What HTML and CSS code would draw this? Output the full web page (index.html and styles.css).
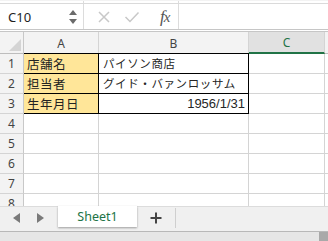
FILE: index.html
```html
<!DOCTYPE html>
<html lang="ja">
<head>
<meta charset="utf-8">
<link rel="stylesheet" href="styles.css">
</head>
<body>
<div class="app">
  <div class="fbar">
    <div class="namebox">
      <span class="name">C10</span>
      <span class="spin">
        <svg width="8" height="16" viewBox="0 0 8 16"><path d="M4 1 L8 6 L0 6 Z" fill="#6b6b6b"/><path d="M0 10 L8 10 L4 15 Z" fill="#6b6b6b"/></svg>
      </span>
    </div>
    <div class="btns">
      <svg class="ic" width="14" height="14" viewBox="0 0 14 14"><path d="M2 2 L12 12 M12 2 L2 12" stroke="#c8c8c8" stroke-width="1.5" fill="none"/></svg>
      <svg class="ic" width="16" height="14" viewBox="0 0 16 14"><path d="M1.5 7 L6 11.5 L14.5 2.5" stroke="#c8c8c8" stroke-width="1.5" fill="none"/></svg>
      <span class="fx"><i>f</i><i class="x">x</i></span>
    </div>
    <div class="input"></div>
  </div>
  <div class="sheet">
    <div class="corner"><svg width="12" height="12" viewBox="0 0 12 12"><path d="M12 0 L12 12 L0 12 Z" fill="#d4d4d4"/></svg></div>
    <div class="ch">A</div>
    <div class="ch">B</div>
    <div class="ch sel">C</div>
    <div class="ch last"></div>

    <div class="rh">1</div>
    <div class="c lab bt">店舗名</div>
    <div class="c val bt">パイソン商店</div>
    <div class="c"></div><div class="c last"></div>

    <div class="rh">2</div>
    <div class="c lab bt">担当者</div>
    <div class="c val bt">グイド・バァンロッサム</div>
    <div class="c"></div><div class="c last"></div>

    <div class="rh">3</div>
    <div class="c lab bt">生年月日</div>
    <div class="c val num bt">1956/1/31</div>
    <div class="c"></div><div class="c last"></div>

    <div class="rh">4</div><div class="c"></div><div class="c"></div><div class="c"></div><div class="c last"></div>
    <div class="rh">5</div><div class="c"></div><div class="c"></div><div class="c"></div><div class="c last"></div>
    <div class="rh">6</div><div class="c"></div><div class="c"></div><div class="c"></div><div class="c last"></div>
    <div class="rh">7</div><div class="c"></div><div class="c"></div><div class="c"></div><div class="c last"></div>
    <div class="rh">8</div><div class="c"></div><div class="c"></div><div class="c"></div><div class="c last"></div>
  </div>
  <div class="tabbar">
    <div class="nav">
      <svg width="8" height="10" viewBox="0 0 8 10"><path d="M7 0 L7 10 L0 5 Z" fill="#7a7a7a"/></svg>
      <svg width="8" height="10" viewBox="0 0 8 10"><path d="M1 0 L1 10 L8 5 Z" fill="#7a7a7a"/></svg>
    </div>
    <div class="tab">Sheet1</div>
    <div class="plus">
      <svg width="12" height="12" viewBox="0 0 12 12"><path d="M6 0.5 V11.5 M0.5 6 H11.5" stroke="#444" stroke-width="2" fill="none"/></svg>
    </div>
    <div class="sep"></div>
  </div>
  <div class="hscroll">
    <div class="thumb"></div>
    <div class="corner2"></div>
  </div>
</div>
</body>
</html>
```
FILE: styles.css
```css
* { box-sizing: border-box; }
html, body { margin: 0; padding: 0; }
body { width: 328px; height: 241px; overflow: hidden; background: #fff; font-family: "Noto Sans", "Liberation Sans", sans-serif; }
.app { width: 328px; height: 241px; display: flex; flex-direction: column; }

.fbar {
  height: 32px;
  display: flex;
  border-top: 1px solid #f3f3f3;
  border-bottom: 3px double #c6c6c6;
  background: #fff;
  position: relative;
}
.fbar::before {
  content: "";
  position: absolute; left: 0; right: 0; top: 2px;
  border-top: 1px solid #dadada;
}
.namebox {
  width: 84px;
  display: flex; align-items: center; justify-content: space-between;
  padding: 3px 6px 0 8px;
  border-right: 1px solid #dcdcdc;
}
.name { font-size: 13px; color: #1e1e1e; }
.spin { display: flex; align-items: center; }
.btns {
  width: 95px;
  display: flex; align-items: center;
  padding: 3px 0 0 13px;
  gap: 13px;
  border-right: 1px solid #dcdcdc;
}
.fx { font-family: "Liberation Serif", serif; font-size: 17px; color: #555; letter-spacing: -1px; margin-left: 7px; }
.fx .x { font-size: 15px; }
.input { flex: 1; }

.sheet {
  display: grid;
  grid-template-columns: 24px 75px 150px 76px 3px;
  grid-template-rows: 22px repeat(8, 20px);
  height: 174px;
  overflow: hidden;
}
.corner { background: #f3f3f3; border-right: 1px solid #c8c8c8; border-bottom: 1px solid #bdbdbd; display: flex; align-items: flex-end; justify-content: flex-end; padding: 0 2px 2px 0; }
.ch {
  background: #f3f3f3;
  border-right: 1px solid #d4d4d4;
  border-bottom: 1px solid #bdbdbd;
  font-size: 12px; color: #444;
  display: flex; align-items: center; justify-content: center;
  padding-top: 1px;
}
.ch.sel { background: #e1e1e1; color: #217346; border-bottom: 2px solid #217346; }
.ch.last { border-right: none; }
.rh {
  background: #f3f3f3;
  border-right: 1px solid #c8c8c8;
  border-bottom: 1px solid #d4d4d4;
  font-size: 12px; color: #444;
  display: flex; align-items: center; justify-content: center;
}
.c {
  border-right: 1px solid #d4d4d4;
  border-bottom: 1px solid #d4d4d4;
  font-family: "Noto Sans CJK JP", sans-serif;
  font-size: 12.5px; color: #222;
  display: flex; align-items: center;
  padding: 0 3px;
  white-space: nowrap;
  overflow: hidden;
}
.c.last { border-right: none; }
.lab { background: #ffe699; letter-spacing: 0.5px; }
.val { font-size: 11.5px; letter-spacing: 0.6px; font-weight: 400; color: #262626; padding-left: 4px; }
.num { justify-content: flex-end; letter-spacing: 0; font-family: "Liberation Sans", sans-serif; font-size: 13px; font-weight: 400; padding-right: 3px; }
.sheet .c.bt {
  box-shadow: inset 0 1px 0 #000;
  margin-top: -1px; height: 21px;
  border-right-color: #000;
  border-bottom-color: #000;
}

.tabbar {
  height: 25px;
  background: #f0f0f0;
  display: flex; align-items: flex-start;
  border-top: 1px solid #dcdcdc;
}
.nav { width: 58px; height: 21px; display: flex; align-items: center; gap: 15px; padding-left: 13px; }
.tab {
  width: 79px; height: 21px;
  background: #fff;
  color: #217346;
  font-size: 12.5px;
  display: flex; align-items: center; justify-content: center;
  box-shadow: 0 1px 2px rgba(0,0,0,0.35);
  margin-top: -1px;
  padding-bottom: 1px;
}
.plus { width: 38px; height: 21px; display: flex; align-items: center; justify-content: center; }
.sep { width: 1px; height: 20px; background: #cfcfcf; margin-top: 1px; }

.hscroll {
  flex: 1;
  background: #e6e6e6;
  border-top: 1px solid #b8b8b8;
  display: flex; justify-content: flex-end;
}
.corner2 { width: 9px; background: #a9a9a9; }
.thumb { flex: 1; }
```
